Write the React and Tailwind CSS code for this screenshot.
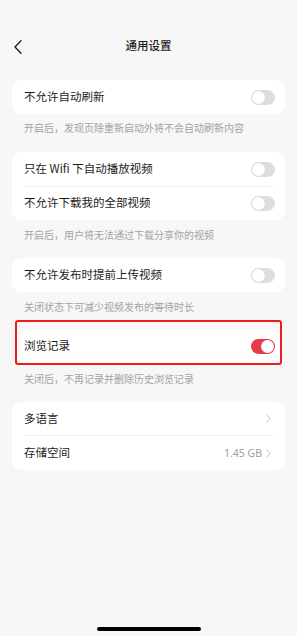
import React from "react";

const font = { fontFamily: '"Noto Sans CJK SC", "Noto Sans", sans-serif' };

function Toggle({ on }) {
  return on ? (
    <div className="w-[24px] h-[15px] rounded-full bg-[#e63b4a] flex items-center justify-end pr-[1px]">
      <div className="w-[13px] h-[13px] rounded-full bg-white" />
    </div>
  ) : (
    <div className="w-[24px] h-[15px] rounded-full bg-[#dedede] flex items-center pl-[1px]">
      <div className="w-[13px] h-[13px] rounded-full bg-white shadow-[0_0_1px_rgba(0,0,0,0.15)]" />
    </div>
  );
}

function Chevron() {
  return (
    <svg width="5" height="9" viewBox="0 0 5 9" fill="none">
      <path d="M0.8 0.8 L4.2 4.5 L0.8 8.2" stroke="#c2c2c2" strokeWidth="1" strokeLinecap="round" strokeLinejoin="round" />
    </svg>
  );
}

function Row({ label, right }) {
  return (
    <div className="h-[34px] flex items-center justify-between pl-[12px] pr-[10px]">
      <span className="text-[11.5px] text-[#1c1c1c] leading-none">{label}</span>
      {right}
    </div>
  );
}

function Hint({ children, pt = "pt-[7px]", pb = "pb-[16px]" }) {
  return (
    <div className={`${pt} ${pb} pl-[24px] text-[10px] leading-[14px] text-[#a3a3a3]`}>{children}</div>
  );
}

export default function App() {
  return (
    <div className="w-[297px] h-[636px] bg-[#f7f7f7] flex flex-col" style={font}>
      {/* header */}
      <div className="pt-[32px] h-[60px] relative flex items-center justify-center">
        <div className="absolute left-[14px] top-[40px]">
          <svg width="8" height="14" viewBox="0 0 8 14" fill="none">
            <path d="M7 0.8 L1 7 L7 13.2" stroke="#222" strokeWidth="1.4" strokeLinecap="round" strokeLinejoin="round" />
          </svg>
        </div>
        <span className="text-[11.5px] text-[#1c1c1c] leading-none font-medium">通用设置</span>
      </div>

      <div className="mt-[20px] mx-[12px] bg-white rounded-[9px]">
        <Row label="不允许自动刷新" right={<Toggle />} />
      </div>
      <Hint pt="pt-[7px]" pb="pb-[17px]">开启后，发现页除重新启动外将不会自动刷新内容</Hint>

      <div className="mx-[12px] bg-white rounded-[9px]">
        <Row label="只在 Wifi 下自动播放视频" right={<Toggle />} />
        <div className="mx-[12px] h-px bg-[#efefef]" />
        <div className="-mt-px">
          <Row label="不允许下载我的全部视频" right={<Toggle />} />
        </div>
      </div>
      <Hint pt="pt-[8px]" pb="pb-[16px]">开启后，用户将无法通过下载分享你的视频</Hint>

      <div className="mx-[12px] bg-white rounded-[9px]">
        <Row label="不允许发布时提前上传视频" right={<Toggle />} />
      </div>
      <Hint pt="pt-[8px]" pb="pb-[6px]">关闭状态下可减少视频发布的等待时长</Hint>

      <div className="mx-[15px] border-2 border-[#f01c1c] rounded-[3px] pt-[7px]">
        <div className="bg-white rounded-[8px] h-[34px] flex items-center justify-between pl-[7px] pr-[5px]">
          <span className="text-[11.5px] text-[#1c1c1c] leading-none">浏览记录</span>
          <Toggle on />
        </div>
      </div>
      <Hint pt="pt-[7px]" pb="pb-[16px]">关闭后，不再记录并删除历史浏览记录</Hint>

      <div className="mx-[12px] bg-white rounded-[9px]">
        <div className="h-[33px] flex items-center justify-between pl-[12px] pr-[14px]">
          <span className="text-[11.5px] text-[#1c1c1c] leading-none">多语言</span>
          <Chevron />
        </div>
        <div className="mx-[12px] h-px bg-[#efefef]" />
        <div className="h-[34px] flex items-center justify-between pl-[12px] pr-[14px]">
          <span className="text-[11.5px] text-[#1c1c1c] leading-none">存储空间</span>
          <div className="flex items-center gap-[4px]">
            <span className="text-[10.5px] text-[#9e9e9e] leading-none" style={{ fontFamily: '"Noto Sans", "Noto Sans CJK SC", sans-serif' }}>1.45 GB</span>
            <Chevron />
          </div>
        </div>
      </div>

      <div className="mt-auto mb-[5px] flex justify-center">
        <div className="w-[104px] h-[4px] rounded-full bg-black" />
      </div>
    </div>
  );
}
